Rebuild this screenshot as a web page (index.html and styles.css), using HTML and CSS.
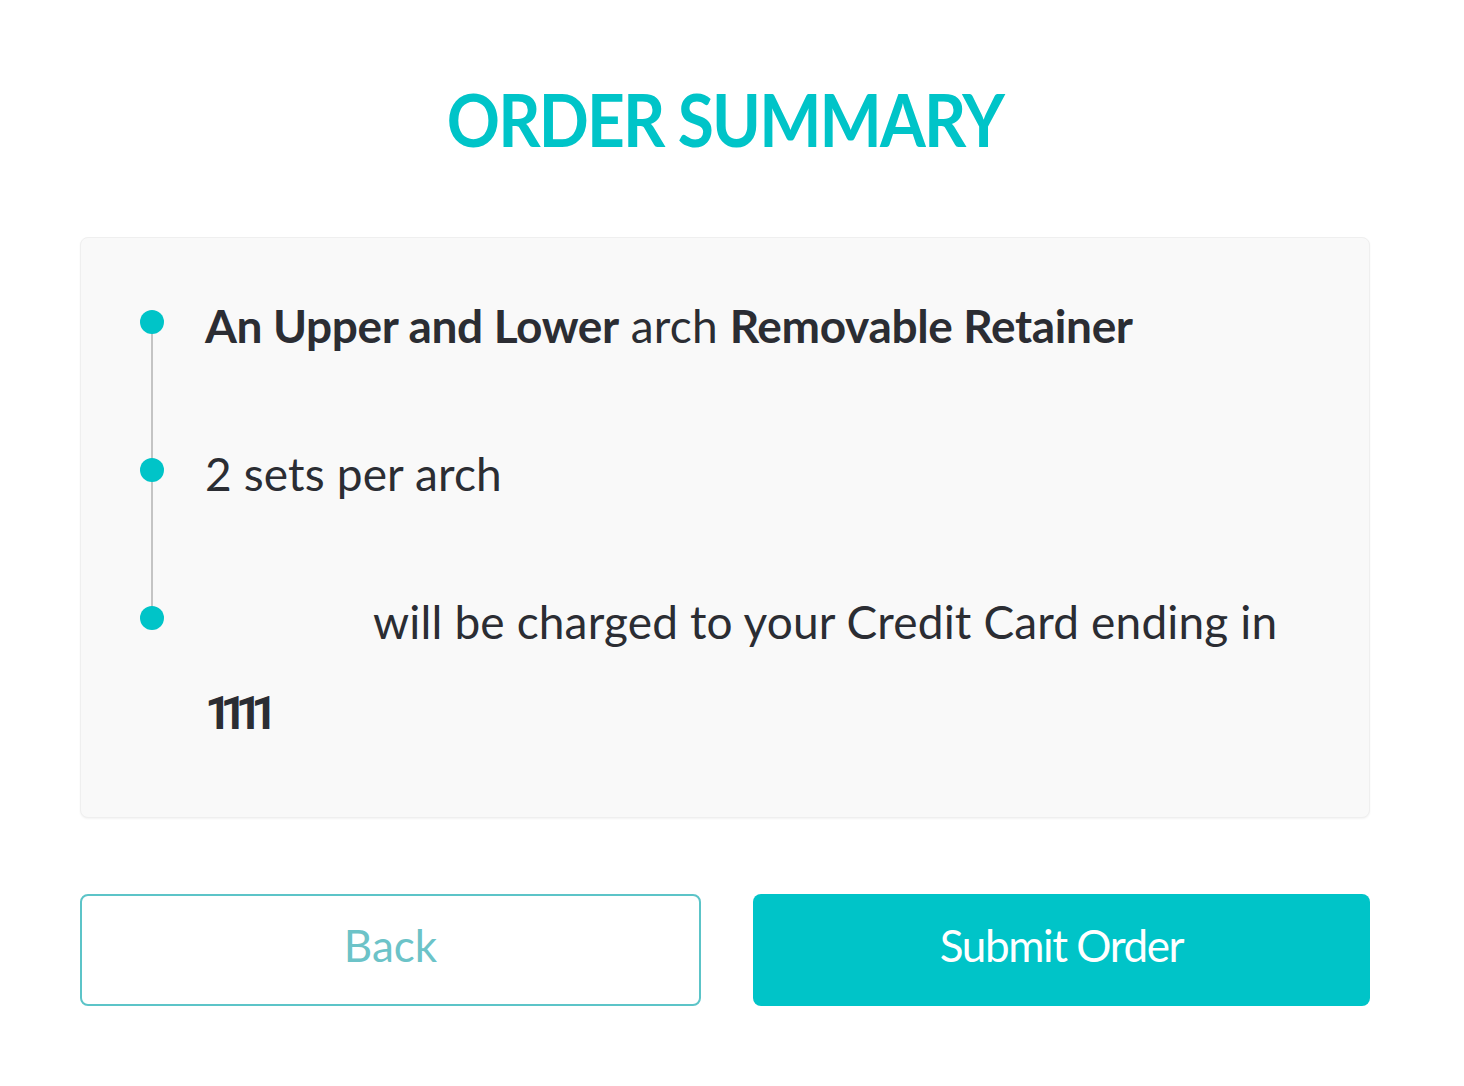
FILE: index.html
```html
<!DOCTYPE html>
<html lang="en">
<head>
  <meta charset="UTF-8" />
  <meta name="viewport" content="width=device-width, initial-scale=1.0"/>
  <title>Order Summary</title>
  <link rel="stylesheet" href="styles.css">
</head>
<body>
  <div class="order-page">
    <h1 class="title">ORDER SUMMARY</h1>

    <div class="summary-card">
      <ul class="steps">
        <li class="step">
          <span class="dot"></span>
          <p><b>An Upper and Lower</b> arch <b>Removable Retainer</b></p>
        </li>
        <li class="step">
          <span class="dot"></span>
          <p>2 sets per arch</p>
        </li>
        <li class="step">
          <span class="dot"></span>
          <p><span class="price"></span>will be charged to your Credit Card ending in <b class="card-digits">1111</b></p>
        </li>
      </ul>
    </div>

    <div class="actions">
      <button class="btn btn-back">Back</button>
      <button class="btn btn-submit">Submit Order</button>
    </div>
  </div>
</body>
</html>
```

FILE: styles.css
```css
body {
  margin: 0;
  padding: 0;
  background: #ffffff;
  font-family: Lato, 'Open Sans', sans-serif;
  color: #2b2d33;
}
.order-page {
  width: 1290px;
  margin-left: 80px;
  padding-top: 83px;
}
.title {
  margin: 0 0 82px;
  text-align: center;
  font-size: 72px;
  line-height: 1;
  font-weight: 700;
  letter-spacing: -2px;
  transform: scaleX(0.915);
  color: #00c4c8;
}
.summary-card {
  background: #f9f9f9;
  border: 1px solid #efefef;
  border-radius: 8px;
  box-shadow: 0 1px 2px rgba(0, 0, 0, 0.05);
  padding: 43px 50px 59px 124px;
}
.steps {
  list-style: none;
  margin: 0;
  padding: 0;
}
.step {
  position: relative;
  margin-bottom: 58px;
}
.step:last-child {
  margin-bottom: 0;
}
.step:not(:last-child)::after {
  content: "";
  position: absolute;
  left: -54px;
  top: 41px;
  height: 148px;
  width: 2px;
  background: #c4c4c4;
}
.dot {
  position: absolute;
  left: -65px;
  top: 29px;
  width: 24px;
  height: 24px;
  border-radius: 50%;
  background: #00c4c8;
  z-index: 1;
}
.step p {
  margin: 0;
  font-size: 46px;
  line-height: 90px;
  letter-spacing: 0.15px;
}
.step b {
  font-weight: 700;
  letter-spacing: -0.35px;
}
.step .card-digits {
  font-family: Roboto, sans-serif;
  letter-spacing: -11px;
}
.price {
  display: inline-block;
  width: 168px;
}
.actions {
  display: flex;
  gap: 52px;
  margin-top: 76px;
}
.btn {
  flex: 1;
  height: 112px;
  padding: 0 0 10px;
  border-radius: 8px;
  font-family: Lato, 'Open Sans', sans-serif;
  font-size: 44px;
  cursor: pointer;
}
.btn-back {
  background: #ffffff;
  border: 2px solid #5cc4c8;
  color: #6cc3c8;
}
.btn-submit {
  background: #00c4c8;
  border: none;
  color: #ffffff;
  font-weight: 400;
  letter-spacing: -1.4px;
}
```
